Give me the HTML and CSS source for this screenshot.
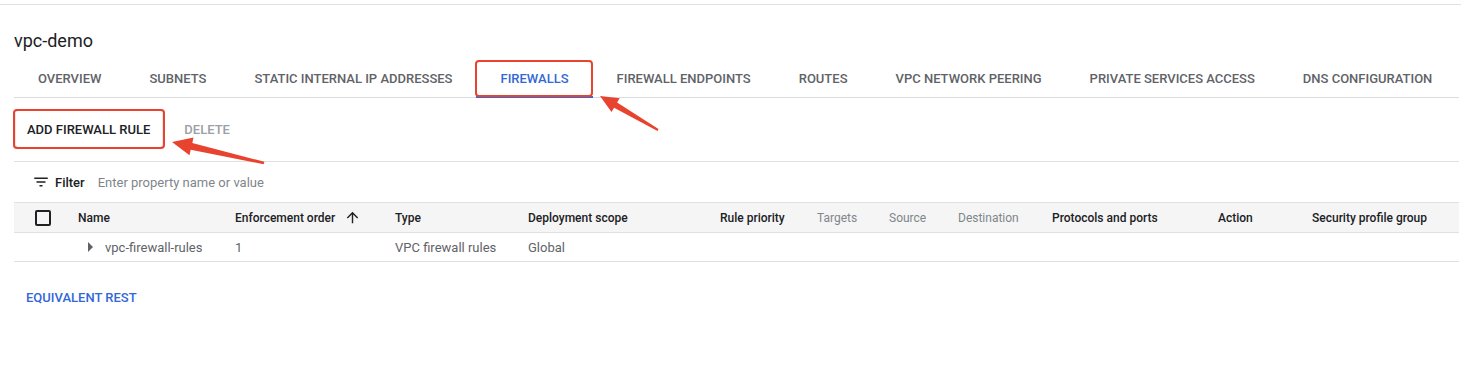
FILE: index.html
```html
<!DOCTYPE html>
<html lang="en">
    <head>
        <meta charset="UTF-8" />
        <title>vpc-demo - VPC network details</title>
        <link rel="stylesheet" href="styles.css">
    </head>
    <body>
        <div class="topline"></div>
        <div class="page">
            <h1 class="title">vpc-demo</h1>

            <div class="tabs">
                <a class="tab">Overview</a>
                <a class="tab">Subnets</a>
                <a class="tab">Static internal IP addresses</a>
                <a class="tab active marked">Firewalls</a>
                <a class="tab">Firewall endpoints</a>
                <a class="tab">Routes</a>
                <a class="tab">VPC network peering</a>
                <a class="tab">Private services access</a>
                <a class="tab">DNS configuration</a>
            </div>

            <div class="toolbar">
                <button class="btn raised marked">Add firewall rule</button>
                <button class="btn disabled">Delete</button>
            </div>

            <div class="filter">
                <svg class="filter-icon" viewBox="0 0 24 24" width="18" height="18"><path d="M10 18h4v-2h-4v2zM3 6v2h18V6H3zm3 7h12v-2H6v2z"/></svg>
                <span class="filter-label">Filter</span>
                <span class="filter-input">Enter property name or value</span>
            </div>

            <div class="grid head">
                <div class="cell"><span class="checkbox"></span></div>
                <div class="cell">Name</div>
                <div class="cell">Enforcement order
                    <svg class="sort" viewBox="0 0 24 24" width="17" height="17"><path d="M4 12l1.41 1.41L11 7.83V20h2V7.83l5.58 5.59L20 12l-8-8-8 8z"/></svg>
                </div>
                <div class="cell">Type</div>
                <div class="cell">Deployment scope</div>
                <div class="cell">Rule priority</div>
                <div class="cell muted">Targets</div>
                <div class="cell muted">Source</div>
                <div class="cell muted">Destination</div>
                <div class="cell">Protocols and ports</div>
                <div class="cell">Action</div>
                <div class="cell">Security profile group</div>
            </div>
            <div class="grid row">
                <div class="cell"></div>
                <div class="cell name"><span class="caret"></span>vpc-firewall-rules</div>
                <div class="cell">1</div>
                <div class="cell">VPC firewall rules</div>
                <div class="cell">Global</div>
                <div class="cell"></div>
                <div class="cell"></div>
                <div class="cell"></div>
                <div class="cell"></div>
                <div class="cell"></div>
                <div class="cell"></div>
                <div class="cell"></div>
            </div>

            <a class="rest">Equivalent REST</a>
        </div>

        <!-- annotation arrows drawn over the page -->
        <svg class="arrows" width="1461" height="375" viewBox="0 0 1461 375">
            <polygon points="600,96 619.7,98.2 617.1,102.5 658.5,129.1 657.5,130.9 614.1,107.7 611.5,112" />
            <polygon points="172,142 193.5,137.6 192.3,143 264.3,161.8 263.7,164.2 190.7,149.8 189.5,155.2" />
        </svg>
    </body>
</html>
```

FILE: styles.css
```css
body {
    margin: 0;
    font-family: Roboto, "Liberation Sans", sans-serif;
    color: #202124;
    background: #fff;
    position: relative;
}

.topline {
    height: 4px;
    border-bottom: 1px solid #e0e0e0;
}

.page {
    padding: 0 2px 0 14px;
}

.title {
    margin: 24px 0 0;
    font-size: 18px;
    font-weight: 400;
    line-height: 24px;
}

/* tabs */
.tabs {
    display: flex;
    margin-top: 7px;
    border-bottom: 1px solid #dadce0;
}
.tab {
    position: relative;
    height: 37px;
    padding: 0 24px;
    display: flex;
    align-items: center;
    font-size: 13px;
    font-weight: 500;
    text-transform: uppercase;
    color: #5f6368;
    white-space: nowrap;
}
.tab.active {
    color: #3367d6;
}
.tab.active::before {
    content: "";
    position: absolute;
    left: 0;
    right: 0;
    bottom: -1px;
    height: 2px;
    background: #3367d6;
}

/* red highlight boxes */
.marked::after {
    content: "";
    position: absolute;
    border: 2px solid #e8432e;
    border-radius: 4px;
    pointer-events: none;
}
.tab.marked::after {
    left: -1px;
    right: 0;
    top: 0;
    bottom: 0;
}
.btn.marked::after {
    left: -3px;
    right: -3px;
    top: -2px;
    bottom: -2px;
}

/* toolbar */
.toolbar {
    display: flex;
    gap: 11px;
    padding: 13px 0 14px 2px;
    border-bottom: 1px solid #e0e0e0;
}
.btn {
    position: relative;
    height: 36px;
    padding: 0 12px 0 11px;
    border: 0;
    border-radius: 2px;
    background: #fff;
    font-family: inherit;
    font-size: 13px;
    font-weight: 500;
    text-transform: uppercase;
    color: #202124;
}
.btn.raised {
    box-shadow: 0 1px 2px rgba(0, 0, 0, 0.3), 0 0 1px rgba(0, 0, 0, 0.15);
}
.btn.disabled {
    color: #9aa0a6;
}

/* filter */
.filter {
    display: flex;
    align-items: center;
    height: 40px;
    padding-left: 18px;
    font-size: 13px;
}
.filter-icon {
    fill: #202124;
    margin-right: 5px;
}
.filter-label {
    font-weight: 500;
    margin-right: 13px;
}
.filter-input {
    color: #80868b;
}

/* table */
.grid {
    display: grid;
    grid-template-columns: 64px 157px 160px 133px 192px 97px 72px 69px 94px 166px 94px 1fr;
    align-items: center;
}
.head {
    height: 29px;
    border-top: 1px solid #e0e0e0;
    border-bottom: 1px solid #e0e0e0;
    background: #f5f5f5;
    font-size: 12px;
    font-weight: 500;
}
.head .cell {
    display: flex;
    align-items: center;
    white-space: nowrap;
}
.head .muted {
    color: #80868b;
    font-weight: 400;
}
.checkbox {
    display: block;
    width: 12px;
    height: 12px;
    margin-left: 21px;
    border: 2px solid #202124;
    border-radius: 2px;
}
.sort {
    fill: #202124;
    margin-left: 9px;
}
.row {
    height: 28px;
    border-bottom: 1px solid #e0e0e0;
    font-size: 13px;
    color: #5f6368;
}
.row .name {
    display: flex;
    align-items: center;
    padding-left: 10px;
}
.caret {
    width: 0;
    height: 0;
    border-top: 5px solid transparent;
    border-bottom: 5px solid transparent;
    border-left: 5px solid #5f6368;
    margin-right: 12px;
}

.rest {
    display: inline-block;
    margin: 28px 0 0 12px;
    font-size: 13px;
    font-weight: 500;
    line-height: 16px;
    text-transform: uppercase;
    color: #3367d6;
}

.arrows {
    position: absolute;
    left: 0;
    top: 0;
    pointer-events: none;
}
.arrows polygon {
    fill: #e8432e;
}
```
